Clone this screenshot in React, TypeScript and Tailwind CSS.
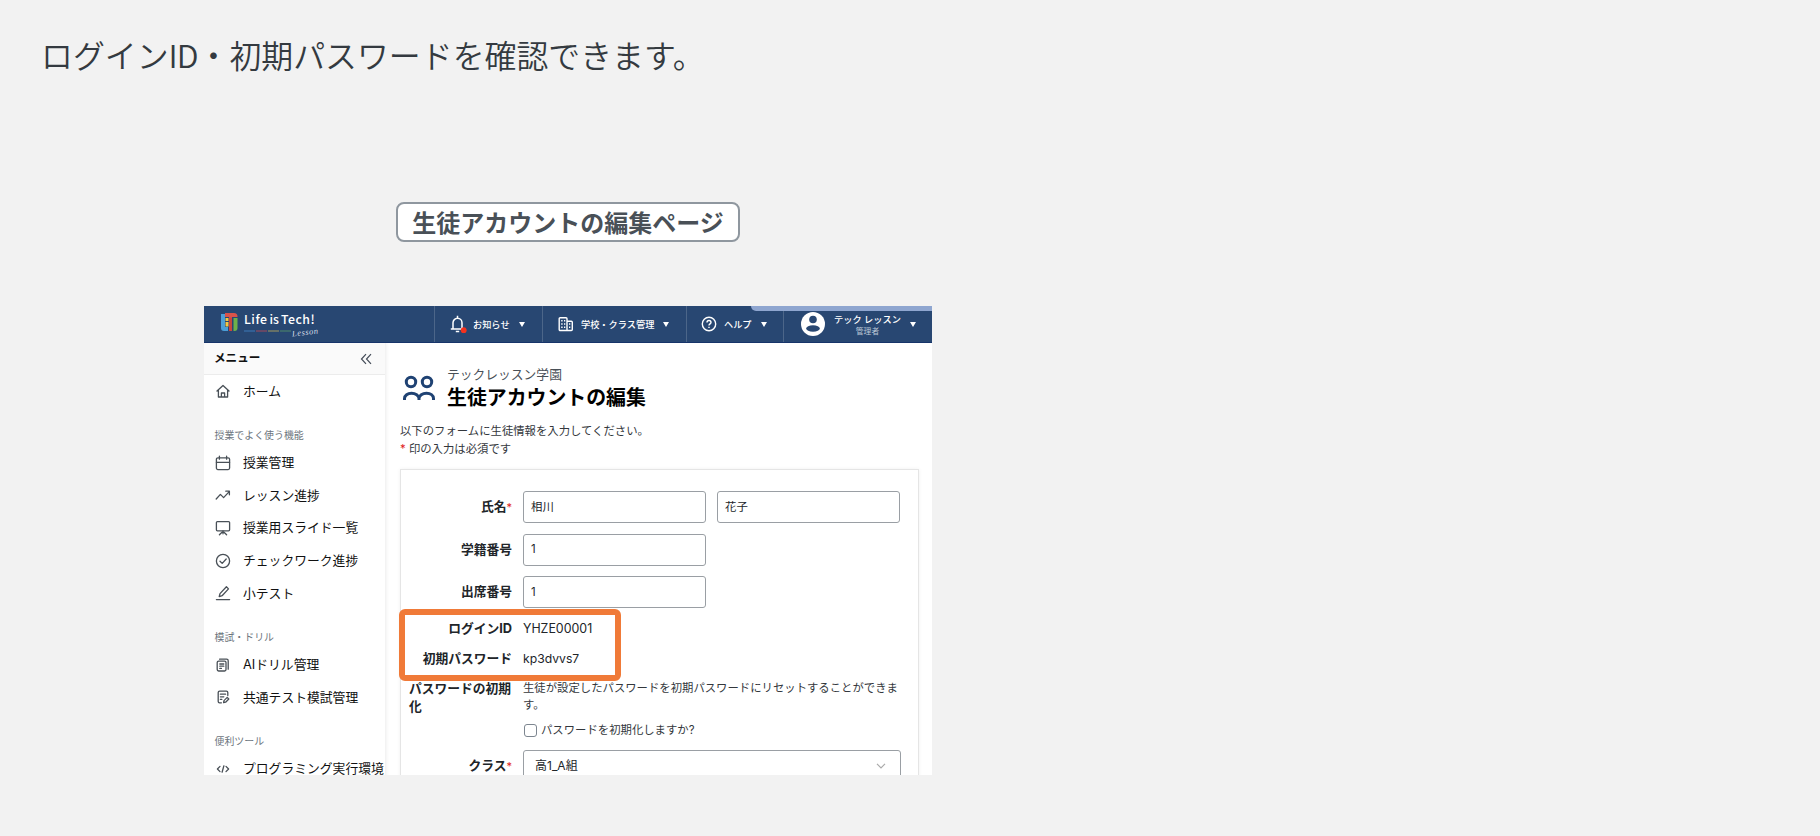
import type { ReactNode } from 'react'

interface MenuItem {
  label: string
  icon: ReactNode
}

interface MenuSection {
  title?: string
  items: MenuItem[]
}

const Icon = ({ children }: { children: ReactNode }) => (
  <svg
    viewBox="0 0 16 16"
    className="h-4 w-4 shrink-0 overflow-visible text-[#495057]"
    fill="none"
    stroke="currentColor"
    strokeWidth="1.3"
    strokeLinecap="round"
    strokeLinejoin="round"
  >
    {children}
  </svg>
)

const sections: MenuSection[] = [
  {
    items: [
      {
        label: 'ホーム',
        icon: (
          <Icon>
            <path d="M2 8l6-5.6L14 8M3.4 7v7h9.2V7M6.4 14v-4h3.2v4" />
          </Icon>
        ),
      },
    ],
  },
  {
    title: '授業でよく使う機能',
    items: [
      {
        label: '授業管理',
        icon: (
          <Icon>
            <rect x="1.4" y="2.8" width="13.2" height="11.8" rx="1.5" />
            <path d="M1.4 7.3h13.2M4.4 1.2v3M11.6 1.2v3" />
          </Icon>
        ),
      },
      {
        label: 'レッスン進捗',
        icon: (
          <Icon>
            <path d="M1.2 12l4.2-4.6 3.2 3.2 5.6-6M10.8 4.2h3.6v3.6" />
          </Icon>
        ),
      },
      {
        label: '授業用スライド一覧',
        icon: (
          <Icon>
            <rect x="1.4" y="1.6" width="13.2" height="9.2" rx="1" />
            <path d="M8 10.8v3M4.4 14.8l2.6-2.6M11.6 14.8L9 12.2" />
          </Icon>
        ),
      },
      {
        label: 'チェックワーク進捗',
        icon: (
          <Icon>
            <circle cx="8" cy="8" r="6.6" />
            <path d="M5 8.2l2.2 2.2L11.2 6" />
          </Icon>
        ),
      },
      {
        label: '小テスト',
        icon: (
          <Icon>
            <path d="M1.4 14.6h13.2M4.2 11.6l.8-3 6.4-6.8 2.1 2.1-6.4 6.8zM4.2 11.6l3-.9" />
          </Icon>
        ),
      },
    ],
  },
  {
    title: '模試・ドリル',
    items: [
      {
        label: 'AIドリル管理',
        icon: (
          <Icon>
            <rect x="2.2" y="4.2" width="8.8" height="9.8" rx="1.4" />
            <path d="M4.6 2.2h7a1.6 1.6 0 011.6 1.6v8.4M4.8 7h4M4.8 9.2h4M4.8 11.4h1.6" />
          </Icon>
        ),
      },
      {
        label: '共通テスト模試管理',
        icon: (
          <Icon>
            <path d="M6.4 13.8H4.6a1.4 1.4 0 01-1.4-1.4V3.6a1.4 1.4 0 011.4-1.4h6.8a1.4 1.4 0 011.4 1.4v3M5.4 5.2h5.2M5.4 7.8h3.4M5.4 10.4h1.4M8.6 13.6l.4-2 3.2-3.2 1.6 1.6-3.2 3.2z" />
          </Icon>
        ),
      },
    ],
  },
  {
    title: '便利ツール',
    items: [
      {
        label: 'プログラミング実行環境',
        icon: (
          <Icon>
            <path d="M5 5.4L2.4 8 5 10.6M11 5.4L13.6 8 11 10.6M8.9 4.8L7.1 11.2" />
          </Icon>
        ),
      },
    ],
  },
]

const Caret = () => (
  <span className="h-0 w-0 shrink-0 border-x-[3.5px] border-t-[5px] border-x-transparent border-t-white" />
)

function Logo() {
  return (
    <div className="flex w-[230px] shrink-0 pl-[17px] pt-[7px]">
      <svg viewBox="0 0 17 19" className="h-[19px] w-[17px]">
        <path d="M0 1h4v13h3v4H3a3 3 0 01-3-3z" fill="#4b9fd8" />
        <path d="M4 0h9a3.500 3.500 0 013.500 3.500V4H11v14H8V4H4z" fill="#d9534a" />
        <rect x="4.500" y="5" width="3" height="3" fill="#f2c744" />
        <rect x="4.500" y="9" width="3" height="4.500" fill="#f2c744" />
        <rect x="8" y="4.500" width="3" height="13.500" fill="#c9453e" />
        <path d="M12.500 5h4v10a3 3 0 01-3 3h-1z" fill="#6fb04a" />
      </svg>
      <div className="ml-[6px] w-20 text-white">
        <div className="flex gap-[2px] whitespace-nowrap font-['Noto_Sans_CJK_JP',sans-serif] text-[12.3px] font-medium leading-[13px]">
          <span className="tracking-[0.5px]">Life</span>
          <span>is</span>
          <span className="tracking-[0.5px]">Tech!</span>
        </div>
        <div className="flex items-start pt-[3px]">
          <svg viewBox="0 0 48 2" className="mt-[1px] h-[2px] w-12 shrink-0">
            <path d="M0 1h11" stroke="#3d7ab8" />
            <path d="M12 1h11" stroke="#a54a5a" />
            <path d="M24 1h11" stroke="#a39a5c" />
            <path d="M36 1h11" stroke="#4f8a68" />
          </svg>
          <span className="-rotate-6 whitespace-nowrap font-['Liberation_Serif',serif] text-[8.5px] italic leading-[7px] tracking-[0.5px] text-[#d5dce6]">
            Lesson
          </span>
        </div>
      </div>
    </div>
  )
}

function Header() {
  return (
    <header className="relative flex h-[37px] border-b border-[#17346a] bg-[#284772] text-[9.2px] font-medium text-white">
      <div className="absolute right-0 top-0 h-[5px] w-[181px] rounded-bl-[7px] bg-[#8fa6d0]" />
      <Logo />
      <div className="flex w-[108px] items-center border-l border-[#4c6689] pl-[15px]">
        <svg viewBox="0 0 16 18" className="h-[18px] w-4 overflow-visible" fill="none" stroke="white" strokeWidth="1.5">
          <path d="M.8 14h13.400M3 14V7.800a4.500 4.500 0 019 0V14M7.500 3.300V.800M5.800 16.500h3.400" />
          <circle cx="13.700" cy="15.200" r="2.900" fill="#f5321e" stroke="none" />
        </svg>
        <span className="ml-[7px] mr-[9px] w-[37px] whitespace-nowrap pt-[1px]">お知らせ</span>
        <Caret />
      </div>
      <div className="flex w-[144px] items-center border-l border-[#4c6689] pl-[15px]">
        <svg viewBox="0 0 16 16" className="h-4 w-4" fill="none" stroke="white" strokeWidth="1.400">
          <path d="M1.200 2.800a1 1 0 011-1H8a1 1 0 011 1v11.700H2.200a1 1 0 01-1-1zM9 5.200h4.300a1 1 0 011 1v7.300a1 1 0 01-1 1H9M3.200 4.800h1.400M6 4.800h1.300M3.200 8h1.400M6 8h1.300M3.200 11.200h1.400M6 11.200h1.300M11 8h1.300M11 11.200h1.300" />
        </svg>
        <span className="ml-[7px] mr-[8px] w-[74px] whitespace-nowrap pt-[1px]">学校・クラス管理</span>
        <Caret />
      </div>
      <div className="flex w-[97px] items-center border-l border-[#4c6689] pl-[14px]">
        <svg viewBox="0 0 16 16" className="h-4 w-4" fill="none" stroke="white" strokeWidth="1.400">
          <circle cx="8" cy="8" r="6.700" />
          <path d="M6 6.500a2 2 0 114 0c0 1.300-2 1.500-2 3M8 10.700v1.300" />
        </svg>
        <span className="ml-[7px] mr-[9px] w-[28px] whitespace-nowrap pt-[1px]">ヘルプ</span>
        <Caret />
      </div>
      <div className="flex flex-1 items-center border-l border-[#4c6689] pl-[17px]">
        <svg viewBox="0 0 24 24" className="h-6 w-6 shrink-0">
          <circle cx="12" cy="12" r="12" fill="white" />
          <circle cx="12" cy="7.500" r="3.800" fill="#284772" />
          <ellipse cx="12" cy="16.500" rx="6.800" ry="3.200" fill="#284772" />
        </svg>
        <div className="ml-[9px] mr-[9px] w-[67px] pt-[2px] text-center">
          <div className="whitespace-nowrap leading-[12px]">テック レッスン</div>
          <div className="text-[7.8px] font-normal leading-[11px] text-[#bcc7d6]">管理者</div>
        </div>
        <Caret />
      </div>
    </header>
  )
}

function Sidebar() {
  return (
    <aside className="w-[182px] shrink-0 border-r border-[#f3f3f3] bg-white shadow-[1px_0_3px_rgba(0,0,0,0.05)]">
      <div className="flex h-[32px] items-center justify-between border-b border-[#ececec] bg-[#fafafa] pl-[10px] pr-[13px]">
        <span className="pt-[1px] text-[11.6px] font-bold text-[#111]">メニュー</span>
        <svg viewBox="0 0 12 12" className="h-3 w-3" fill="none" stroke="#444c58" strokeWidth="1.200">
          <path d="M6 1.200L1.500 6 6 10.800M11 1.200L6.500 6 11 10.800" />
        </svg>
      </div>
      {sections.map((section, i) => (
        <div key={i}>
          {section.title && (
            <div className="h-[38.6px] pl-[10.5px] pt-[18px] text-[9.93px] leading-[18px] text-[#6c757d]">
              {section.title}
            </div>
          )}
          {section.items.map(item => (
            <div key={item.label} className="flex h-[32.7px] items-center gap-[12px] pl-[11px]">
              {item.icon}
              <span className="whitespace-nowrap text-[12.8px] text-[#111]">{item.label}</span>
            </div>
          ))}
        </div>
      ))}
    </aside>
  )
}

const Label = ({ children, required }: { children: ReactNode; required?: boolean }) => (
  <div className="w-[103px] shrink-0 text-right text-[12.77px] font-bold leading-[18px] text-[#212529]">
    <span className="inline-block text-left">{children}</span>
    {required && <span className="text-[11px] font-normal text-[#e02020]">*</span>}
  </div>
)

const Input = ({ value }: { value: string }) => (
  <div className="flex h-[32px] w-[183px] items-center rounded-[3px] border border-[#9a9fa4] px-[7px] pt-[1px] text-[11.4px] text-[#212529]">
    {value}
  </div>
)

function StudentForm() {
  return (
    <div className="relative ml-[14px] mt-[11px] h-[330px] w-[519px] border border-[#e5e5e5] pl-[8px] pt-[21px] shadow-[0_0_4px_rgba(0,0,0,0.06)]">
      <div className="flex h-[32px] items-center gap-[11px]">
        <Label required>氏名</Label>
        <Input value="相川" />
        <Input value="花子" />
      </div>
      <div className="mt-[10.500px] flex h-[32px] items-center gap-[11px]">
        <Label>学籍番号</Label>
        <Input value="1" />
      </div>
      <div className="mt-[10.500px] flex h-[32px] items-center gap-[11px]">
        <Label>出席番号</Label>
        <Input value="1" />
      </div>
      <div className="mt-[6px] flex h-[30px] items-center gap-[11px]">
        <Label>ログインID</Label>
        <span className="text-[12.4px] text-[#212529]">YHZE00001</span>
      </div>
      <div className="flex h-[30px] items-center gap-[11px]">
        <Label>初期パスワード</Label>
        <span className="text-[12.2px] text-[#212529]">kp3dvvs7</span>
      </div>
      <div className="mt-[6px] flex gap-[11px]">
        <Label>パスワードの初期化</Label>
        <div className="w-[380px] text-[11.36px] leading-[17px] text-[#33373c]">
          <p>生徒が設定したパスワードを初期パスワードにリセットすることができます。</p>
          <div className="mt-[8px] flex items-center gap-[4px]">
            <span className="ml-[1px] h-[13px] w-[13px] rounded-[3px] border border-[#7d8690] bg-white" />
            パスワードを初期化しますか?
          </div>
        </div>
      </div>
      <div className="mt-[11px] flex h-[32px] items-center gap-[11px]">
        <Label required>クラス</Label>
        <div className="flex h-[32px] w-[378px] items-center justify-between rounded-[3px] border border-[#9a9fa4] pl-[11px] pr-[14px] text-[12px] text-[#212529]">
          高1_A組
          <svg viewBox="0 0 10 6" className="h-[6px] w-[10px]" fill="none" stroke="#aaa" strokeWidth="1.200">
            <path d="M1 .8l4 4 4-4" />
          </svg>
        </div>
      </div>
      {/* callout around the login credentials */}
      <div className="absolute -left-[2px] top-[139px] h-[72px] w-[222px] rounded-[6px] border-6 border-[#f07a38]" />
    </div>
  )
}

export default function App() {
  return (
    <div className="h-[836px] w-[1820px] overflow-hidden bg-[#f2f2f2] font-['Inter','Noto_Sans_CJK_JP',sans-serif]">
      <h1 className="pl-[41px] pt-[30px] font-['Noto_Sans_CJK_JP_DemiLight','Noto_Sans_CJK_JP',sans-serif] text-[31.900px] font-[350] leading-[48px] text-[#343a40]">
        ログイン<span className="tracking-[-1px]">ID</span>・初期パスワードを確認できます。
      </h1>
      <div className="ml-[396px] mt-[124px] flex h-[40px] w-[344px] items-center justify-center rounded-[8px] border-2 border-[#8f979f] bg-white pt-[3px] text-[24px] font-bold text-[#495057]">
        生徒アカウントの編集ページ
      </div>
      <div className="ml-[204px] mt-[64px] h-[469px] w-[728px] overflow-hidden bg-white">
        <Header />
        <div className="flex">
          <Sidebar />
          <main className="min-w-0 flex-1">
            <div className="flex items-center gap-[12px] pl-[17px] pt-[22px]">
              <svg viewBox="0 0 32 26" className="h-[26px] w-8" fill="none" stroke="#1f4273" strokeWidth="3">
                <circle cx="8" cy="7" r="4.700" />
                <circle cx="24" cy="7" r="4.700" />
                <path d="M1.500 25v-1.500c0-3 3.200-5.300 7-5.300s7.500 2.300 7.500 5.300V25M16 23.500c0-3 3.500-5.300 7.500-5.300s7 2.300 7 5.300V25" />
              </svg>
              <div>
                <div className="text-[12.77px] leading-[20px] text-[#495057]">テックレッスン学園</div>
                <h2 className="text-[19.900px] font-bold leading-[26px] text-black">生徒アカウントの編集</h2>
              </div>
            </div>
            <div className="pl-[14px] pt-[11px] text-[11.36px] leading-[18px] text-[#33373c]">
              <p>以下のフォームに生徒情報を入力してください。</p>
              <p>
                <span className="text-[#e02020]">*</span> 印の入力は必須です
              </p>
            </div>
            <StudentForm />
          </main>
        </div>
      </div>
    </div>
  )
}
